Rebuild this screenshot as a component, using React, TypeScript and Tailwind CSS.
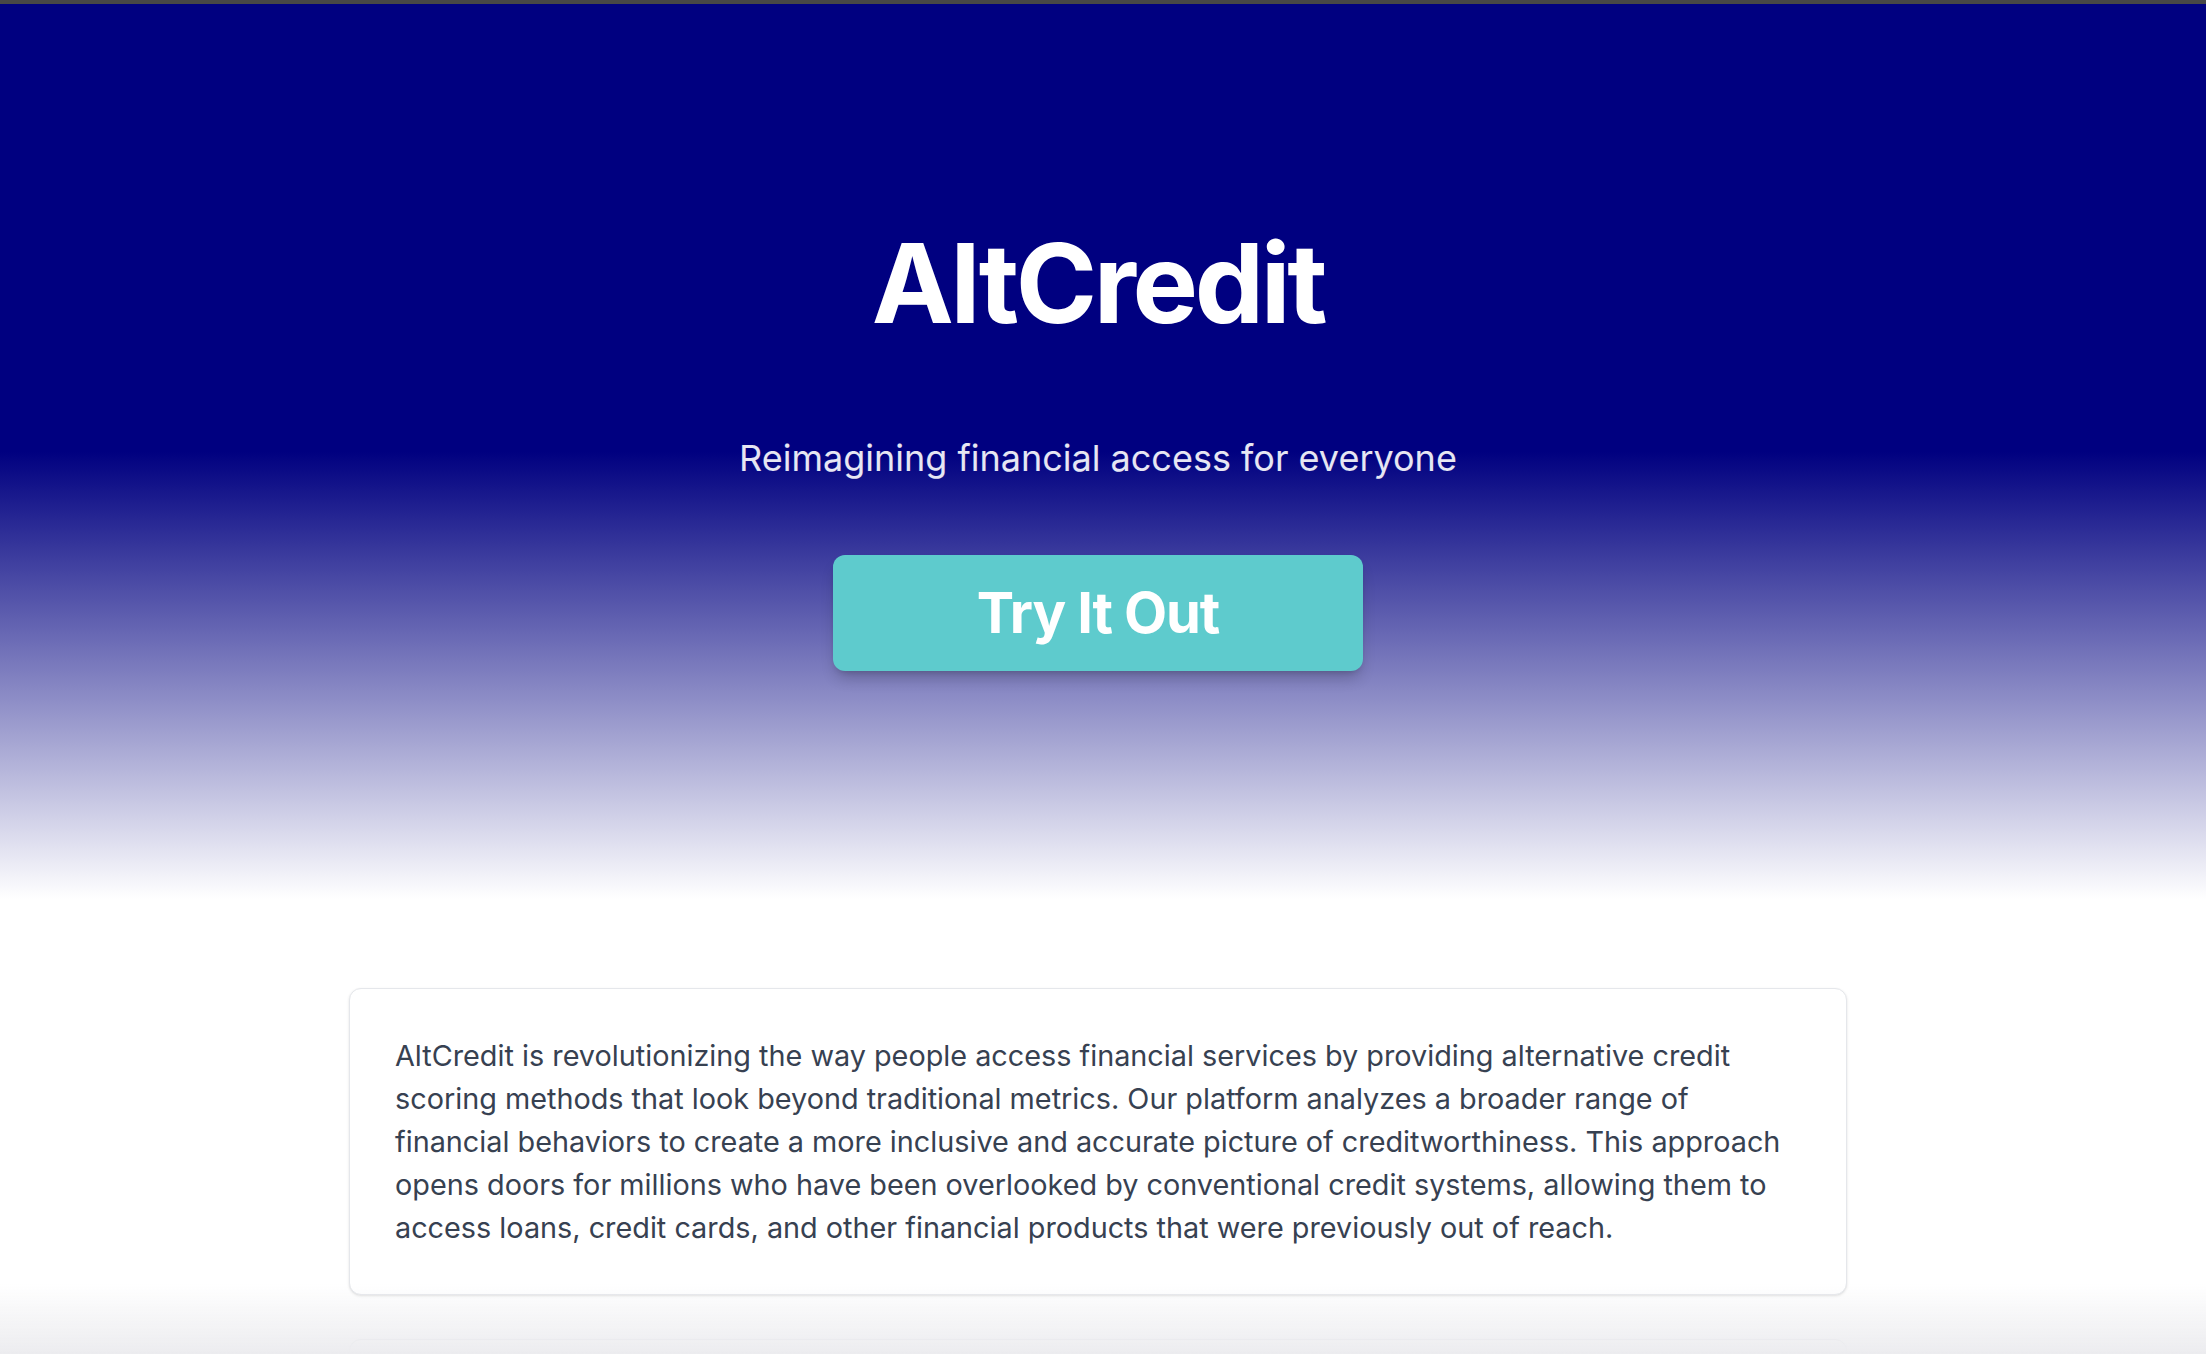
import React from 'react';

const about =
  'AltCredit is revolutionizing the way people access financial services by providing alternative credit scoring methods that look beyond traditional metrics. Our platform analyzes a broader range of financial behaviors to create a more inclusive and accurate picture of creditworthiness. This approach opens doors for millions who have been overlooked by conventional credit systems, allowing them to access loans, credit cards, and other financial products that were previously out of reach.';

const App = () => {
  return (
    <div className="min-h-screen bg-white font-['Inter','Liberation_Sans',sans-serif]">
      <div className="h-[4px] bg-[#474747]"></div>

      <header className="flex flex-col items-center pt-[224px] pb-[228px] pr-[10px] bg-linear-to-b/srgb from-[#000080] via-[#000080] via-50% to-white">
        <h1 className="text-[110px] leading-none font-bold tracking-[-0.03em] text-white">AltCredit</h1>
        <p className="mt-[93px] text-[36px] leading-[54px] text-white/90">
          Reimagining financial access for everyone
        </p>
        <button className="mt-[70px] w-[530px] h-[116px] rounded-xl bg-[#5ecbcd] text-white text-[56px] font-bold tracking-[-0.02em] shadow-lg shadow-black/20">
          Try It Out
        </button>
      </header>

      <main className="flex flex-col items-center gap-[44px] pt-[89px] pb-24 pr-[10px]">
        <section className="w-[1498px] rounded-xl border border-[#e5e7eb] bg-white px-[45px] py-[45px] shadow-sm">
          <p className="text-[28.8px] leading-[43px] text-[#374151]">{about}</p>
        </section>
        <section className="w-[1498px] rounded-xl border border-[#e5e7eb] bg-white px-[45px] py-[45px] shadow-sm">
          <h2 className="text-[40px] font-bold text-[#111827]">How It Works</h2>
          <p className="mt-4 text-[28.8px] leading-[43px] text-[#374151]">
            Connect your accounts, let us analyze your financial behavior, and receive a fair credit score.
          </p>
        </section>
      </main>

      <div className="pointer-events-none fixed inset-x-0 bottom-0 h-[70px] bg-gradient-to-b from-transparent to-[#ececef]"></div>
    </div>
  );
};

export default App;
